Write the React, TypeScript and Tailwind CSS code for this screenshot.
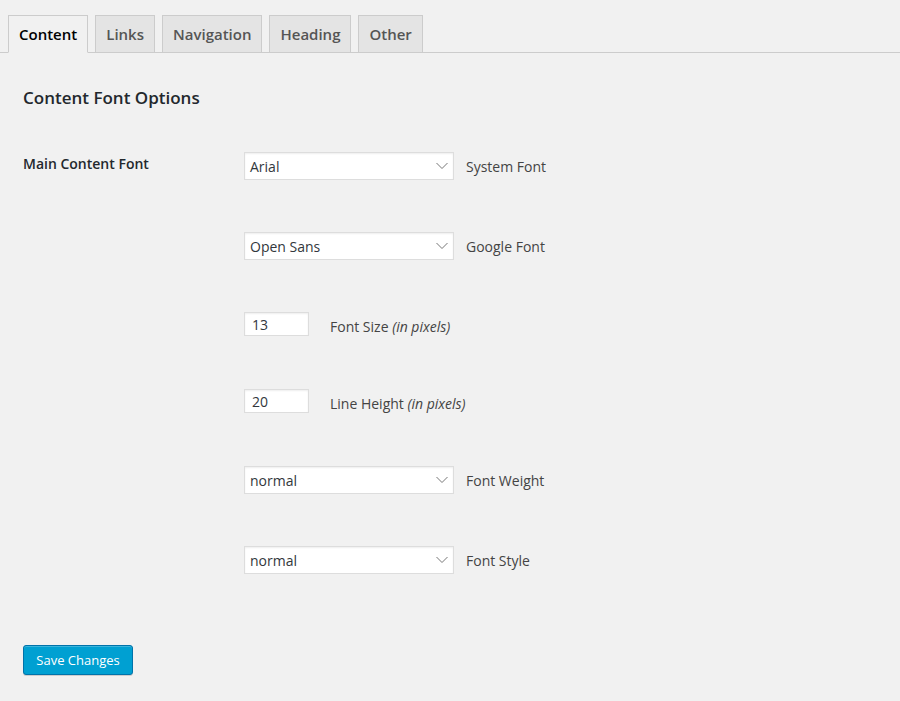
import { ReactNode } from "react";

const tabs = ["Content", "Links", "Navigation", "Heading", "Other"];

function Chevron() {
  return (
    <svg width="12" height="7" viewBox="0 0 12 7" className="absolute right-[5px] top-1/2 -translate-y-1/2">
      <path d="M0.5 0.5 L6 6 L11.5 0.5" fill="none" stroke="#777" strokeWidth="1" />
    </svg>
  );
}

function SelectBox({ value }: { value: string }) {
  return (
    <div className="relative w-[210px] h-[28px] bg-white border border-[#ddd] shadow-[inset_0_1px_2px_rgba(0,0,0,0.07)] flex items-center pl-[5px] text-[14px] text-[#32373c]">
      {value}
      <Chevron />
    </div>
  );
}

function NumberBox({ value }: { value: string }) {
  return (
    <div className="w-[65px] h-[24px] bg-white border border-[#ddd] shadow-[inset_0_1px_2px_rgba(0,0,0,0.07)] flex items-center pl-[7px] text-[14px] text-[#32373c]">
      {value}
    </div>
  );
}

function Row({ control, label, input }: { control: ReactNode; label: ReactNode; input?: boolean }) {
  return (
    <div className={input ? "flex items-start h-[25px]" : "flex items-center h-[28px]"}>
      {control}
      <span className={input ? "ml-[21px] pt-[3px] text-[14px] leading-[24px] text-[#444]" : "ml-[12px] text-[14px] text-[#444]"}>
        {label}
      </span>
    </div>
  );
}

export default function App() {
  return (
    <div className="min-h-[701px] bg-[#f1f1f1] font-['Open_Sans',sans-serif] text-[#444]">
      {/* onglets */}
      <div className="flex gap-[7px] pl-2 pt-[15px] border-b border-[#ccc]">
        {tabs.map((t, i) => (
          <div
            key={t}
            className={
              i === 0
                ? "-mb-px border border-[#ccc] border-b-[#f1f1f1] bg-[#f1f1f1] px-[10px] py-[6px] text-[15px] leading-[24px] font-semibold text-black"
                : "-mb-px border border-[#ccc] bg-[#e4e4e4] px-[10px] py-[6px] text-[15px] leading-[24px] font-semibold text-[#555]"
            }
          >
            {t}
          </div>
        ))}
      </div>

      <div className="px-[23px]">
        <h3 className="mt-[34px] text-[17px] leading-[22px] font-semibold text-[#23282d]">Content Font Options</h3>

        <div className="flex mt-[43px]">
          <div className="w-[221px] pt-[2px] text-[14px] leading-[20px] font-semibold text-[#23282d]">Main Content Font</div>
          <div className="flex flex-col gap-[52px]">
            <Row control={<SelectBox value="Arial" />} label="System Font" />
            <Row control={<SelectBox value="Open Sans" />} label="Google Font" />
            <Row input control={<NumberBox value="13" />} label={<>Font Size <i>(in pixels)</i></>} />
            <Row input control={<NumberBox value="20" />} label={<>Line Height <i>(in pixels)</i></>} />
            <Row control={<SelectBox value="normal" />} label="Font Weight" />
            <Row control={<SelectBox value="normal" />} label="Font Style" />
          </div>
        </div>

        <button className="mt-[71px] h-[30px] w-[110px] pt-px rounded-[3px] border border-[#0073aa] bg-[#00a0d2] text-[13px] text-white shadow-[inset_0_1px_0_rgba(120,200,230,0.5),0_1px_0_rgba(0,0,0,0.15)]">
          Save Changes
        </button>
      </div>
    </div>
  );
}
